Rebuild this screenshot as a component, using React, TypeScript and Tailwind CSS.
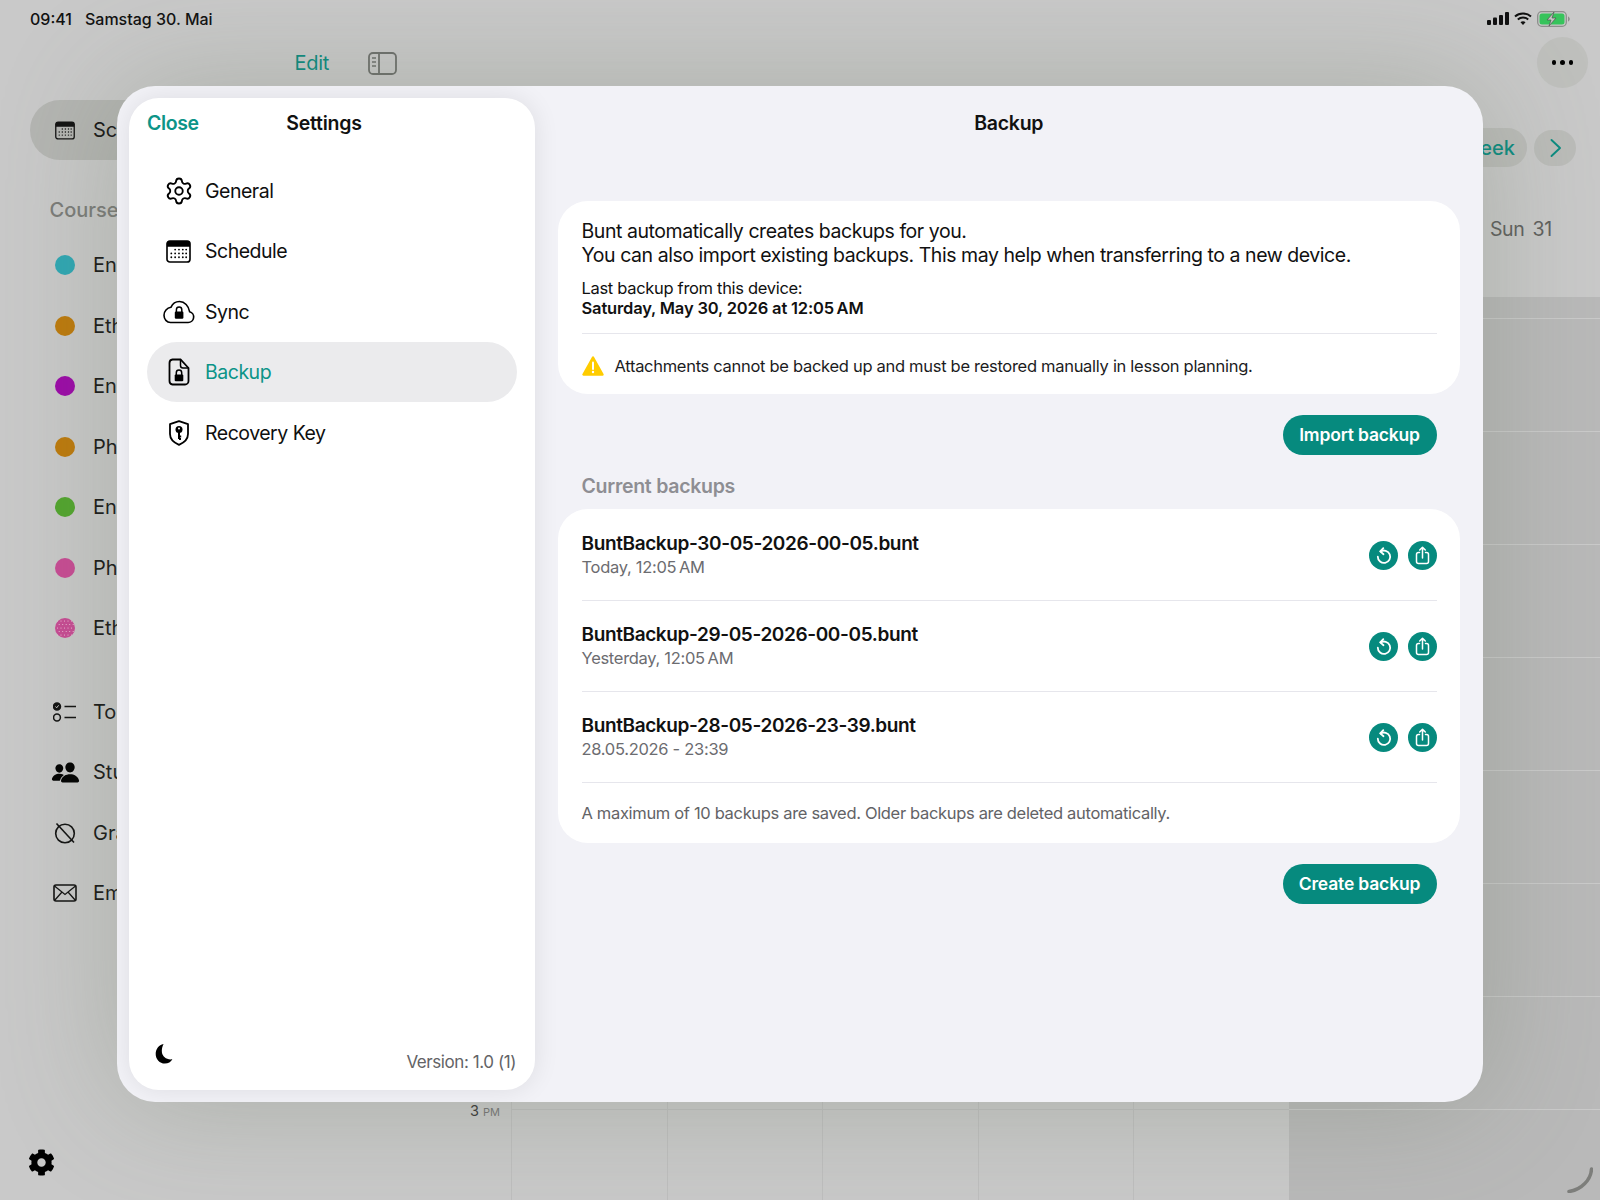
import { Settings as SettingsIcon } from 'lucide-react';
import { FaCog } from 'react-icons/fa';
import { IoPeople } from 'react-icons/io5';

const courses = [
  { name: 'English', color: 'bg-[#2fa7b3]' },
  { name: 'Ethics', color: 'bg-[#bd7a0c]' },
  { name: 'English', color: 'bg-[#9c0aa8]' },
  { name: 'Physics', color: 'bg-[#bd7a0c]' },
  { name: 'English', color: 'bg-[#52a52e]' },
  { name: 'Physics', color: 'bg-[#c84b94]' },
];

const hours = ['8 AM', '9 AM', '10 AM', '11 AM', '12 PM', '1 PM', '2 PM', '3 PM'];
const days = [0, 1, 2, 3, 4, 5, 6];
const rows = [0, 1, 2, 3, 4, 5, 6, 7, 8];

const backups = [
  { name: 'BuntBackup-30-05-2026-00-05.bunt', when: 'Today, 12:05\u202fAM' },
  { name: 'BuntBackup-29-05-2026-00-05.bunt', when: 'Yesterday, 12:05\u202fAM' },
  { name: 'BuntBackup-28-05-2026-23-39.bunt', when: '28.05.2026 - 23:39' },
];

function CalendarIcon({ className }: { className: string }) {
  return (
    <svg viewBox="0 0 26 24" className={className} fill="currentColor">
      <rect x="1" y="1" width="24" height="22" rx="3" fill="none" stroke="currentColor" strokeWidth="1.7" />
      <path d="M1 4a3 3 0 0 1 3-3h18a3 3 0 0 1 3 3v3H1z" />
      {[9, 13, 17].map((y) =>
        [5.5, 9.5, 13.5, 17.5, 21].map((x) =>
          y === 9 && x < 9 ? null : <circle key={`${x}-${y}`} cx={x} cy={y + 1} r="0.95" />
        )
      )}
    </svg>
  );
}

function DottedDot() {
  return (
    <svg viewBox="0 0 20 20" className="h-[20px] w-[20px]">
      <circle cx="10" cy="10" r="10" fill="#c84b94" />
      {[3, 6.5, 10, 13.5, 17].map((y, i) =>
        [2.5, 6, 9.5, 13, 16.5].map((x) => (
          <circle key={`${x}-${y}`} cx={i % 2 ? x + 1.7 : x} cy={y} r="0.55" fill="#f0c4dc" />
        ))
      )}
    </svg>
  );
}

function CloudLockIcon() {
  return (
    <svg viewBox="0 0 32 24" className="h-[24px] w-[32px]" fill="none" stroke="currentColor" strokeWidth="1.6">
      <path d="M7.5 22.5h17.5a5.5 5.5 0 0 0 1.6-10.8C25.8 6 21.6 1.5 16.5 1.5c-4 0-7 2.300-8.600 5.800C4 8 1 11.300 1 15.200c0 4 2.800 7.300 6.500 7.300z" />
      <path d="M13.400 12V9.800a2.700 2.700 0 0 1 5.400 0V12" strokeWidth="1.500" />
      <rect x="11.800" y="11.500" width="8.600" height="7.200" rx="1.200" fill="currentColor" stroke="none" />
    </svg>
  );
}

function DocLockIcon() {
  return (
    <svg viewBox="0 0 22 28" className="h-[28px] w-[22px]" fill="none" stroke="currentColor" strokeWidth="1.8">
      <path d="M4.500 1.500h8l8 8.500v13a3.500 3.500 0 0 1-3.500 3.500H4.500A3.500 3.500 0 0 1 1.500 23V5a3.500 3.500 0 0 1 3-3.500z" />
      <path d="M12.500 1.500V7.500a2.500 2.500 0 0 0 2.500 2.500h5.500" strokeWidth="1.500" />
      <path d="M8.300 17v-2.300a2.700 2.700 0 0 1 5.400 0V17" strokeWidth="1.500" />
      <rect x="6.700" y="16.500" width="8.600" height="6.800" rx="1.100" fill="currentColor" stroke="none" />
    </svg>
  );
}

function ShieldKeyIcon() {
  return (
    <svg viewBox="0 0 22 26" className="h-[26px] w-[22px]" fill="none" stroke="currentColor" strokeWidth="1.8">
      <path d="M11 1.200 2 4.200V14c0 5.300 4.300 8.800 9 10.800 4.700-2 9-5.500 9-10.800V4.200z" strokeLinejoin="round" />
      <circle cx="11" cy="9.500" r="3.500" fill="currentColor" stroke="none" />
      <path d="M11 12v7M11 16.500h2.200M11 19h2" strokeWidth="2" />
      <circle cx="11" cy="8.500" r="1" fill="#fff" stroke="none" />
    </svg>
  );
}

function RestoreIcon() {
  return (
    <svg viewBox="0 0 29 29" className="h-[29px] w-[29px]" fill="none" stroke="#fff" strokeWidth="1.800" strokeLinecap="round">
      <path d="M11.500 10.600a6.200 6.200 0 1 1-2.700 5.100" />
      <path d="M14.300 7.200 11.200 10.400l3.300 2.800" strokeLinejoin="round" />
    </svg>
  );
}

function ShareIcon() {
  return (
    <svg viewBox="0 0 29 29" className="h-[29px] w-[29px]" fill="none" stroke="#fff" strokeWidth="1.500" strokeLinecap="round" strokeLinejoin="round">
      <path d="M11.500 11.500h-1A2 2 0 0 0 8.500 13.500v7a2 2 0 0 0 2 2h8a2 2 0 0 0 2-2v-7a2 2 0 0 0-2-2h-1" />
      <path d="M14.500 17V6.500M11.700 9l2.800-2.800L17.300 9" />
    </svg>
  );
}

function Row({ icon, label, active }: { icon: React.ReactNode; label: string; active?: boolean }) {
  return (
    <div className={`flex h-[60px] items-center rounded-full ${active ? 'bg-[#ebebed] text-[#0c9488]' : 'text-[#0f0f0f]'}`}>
      <div className="flex w-[58px] shrink-0 justify-center pl-[5.5px] text-black">{icon}</div>
      <span className="pt-[1.5px] text-[19.5px] tracking-[-0.025em]">{label}</span>
    </div>
  );
}

function BackupRow({ name, when }: { name: string; when: string }) {
  return (
    <div className="flex h-[91px] items-center justify-between border-b border-[#e6e6ec]">
      <div>
        <div className="pt-[1px] text-[19px] leading-[24px] font-semibold tracking-[-0.02em] text-[#111]">{name}</div>
        <div className="text-[16.5px] leading-[23px] tracking-[-0.018em] text-[#6c6c70]">{when}</div>
      </div>
      <div className="flex gap-[10px] pl-[1px]">
        <div className="rounded-full bg-[#068a7e]">
          <RestoreIcon />
        </div>
        <div className="rounded-full bg-[#068a7e]">
          <ShareIcon />
        </div>
      </div>
    </div>
  );
}

function PrimaryButton({ label }: { label: string }) {
  return (
    <div className="flex justify-end">
      <div className="flex h-[40px] w-[154px] items-center justify-center rounded-full bg-[#068a7e] pt-[1px] text-[17.5px] font-semibold tracking-[-0.01em] text-white">
        {label}
      </div>
    </div>
  );
}

function SettingsModal() {
  return (
    <div className="absolute top-[86px] left-[117px] flex h-[1016px] w-[1366px] overflow-hidden rounded-[38px] bg-[#f2f2f7] p-[12px] shadow-[0_0_120px_rgba(101,114,88,0.3)]">
      <div className="relative flex w-[406px] shrink-0 flex-col rounded-[30px] bg-white shadow-[0_0_26px_rgba(0,0,0,0.09)]">
        <div className="relative flex h-[50px] items-center justify-center pt-[2px] pr-[16px]">
          <span className="absolute left-[18px] text-[19.5px] font-semibold tracking-[-0.02em] text-[#0c9488]">Close</span>
          <span className="text-[19.5px] font-semibold tracking-[-0.012em] text-[#111]">Settings</span>
        </div>
        <div className="mt-[12.5px] flex flex-col gap-[0.5px] px-[18px]">
          <Row icon={<SettingsIcon className="h-[30px] w-[30px]" strokeWidth={1.5} />} label="General" />
          <Row icon={<CalendarIcon className="h-[23px] w-[25px]" />} label="Schedule" />
          <Row icon={<CloudLockIcon />} label="Sync" />
          <Row icon={<DocLockIcon />} label="Backup" active />
          <Row icon={<ShieldKeyIcon />} label="Recovery Key" />
        </div>
        <div className="mt-auto flex items-end justify-between pr-[19px] pb-[17px] pl-[25px]">
          <svg viewBox="0 0 22 24" className="mb-[9px] h-[21px] w-[20px]" fill="#000">
            <path d="M10.500 1C5 2 1.500 6.700 1.500 12.500 1.500 18.500 6 23.500 12 23.500c3.900 0 6.900-1.900 8.600-4.900-6.300 1-11.400-2.500-12-7.900C8.200 7.300 9 3.800 10.500 1z" />
          </svg>
          <span className="text-[17px] leading-[22px] tracking-[-0.025em] text-[#636366]">Version: 1.0 (1)</span>
        </div>
      </div>

      <div className="min-w-0 flex-1 pr-[11.5px] pl-[23px]">
        <div className="flex h-[50px] items-center justify-center pt-[2px] text-[19.5px] font-semibold tracking-[-0.015em] text-[#111]">
          Backup
        </div>
        <div className="mt-[53px] h-[193px] rounded-[30px] bg-white pt-[18px] pr-[23px] pl-[23.5px]">
          <div className="text-[19.5px] leading-[24px] tracking-[-0.023em] text-[#111]">
            <div>Bunt automatically creates backups for you.</div>
            <div>You can also import existing backups. This may help when transferring to a new device.</div>
          </div>
          <div className="mt-[11px] text-[16.5px] leading-[20px] text-[#111]">
            <div className="tracking-[-0.019em]">Last backup from this device:</div>
            <div className="font-semibold tracking-[-0.01em]">Saturday, May 30, 2026 at 12:05{'\u202f'}AM</div>
          </div>
          <div className="mt-[15px] flex h-[65px] items-center gap-[11px] border-t border-[#e6e6ec]">
            <svg viewBox="0 0 22 20" className="h-[20px] w-[22px] shrink-0">
              <path d="M11 1.500 1.500 18.500h19z" fill="#ffcc00" stroke="#ffcc00" strokeWidth="2.400" strokeLinejoin="round" />
              <path d="M11 6.500v6.500" stroke="#fff" strokeWidth="2" strokeLinecap="round" />
              <circle cx="11" cy="16" r="1.200" fill="#fff" />
            </svg>
            <span className="text-[16.5px] tracking-[-0.018em] text-[#1c1c1e]">
              Attachments cannot be backed up and must be restored manually in lesson planning.
            </span>
          </div>
        </div>

        <div className="mt-[21px] pr-[23px]">
          <PrimaryButton label="Import backup" />
        </div>
        <div className="mt-[17px] pl-[23.5px] text-[19.5px] leading-[28px] font-semibold tracking-[-0.014em] text-[#8e8e93]">
          Current backups
        </div>
        <div className="mt-[9px] rounded-[30px] bg-white pt-[1px] pr-[23px] pl-[23.5px]">
          {backups.map((b) => (
            <BackupRow key={b.name} name={b.name} when={b.when} />
          ))}
          <div className="flex h-[60px] items-center text-[16.5px] tracking-[-0.02em] text-[#636366]">
            A maximum of 10 backups are saved. Older backups are deleted automatically.
          </div>
        </div>
        <div className="mt-[21px] pr-[23px]">
          <PrimaryButton label="Create backup" />
        </div>
      </div>
    </div>
  );
}

function SideIconRow({ icon, label }: { icon: React.ReactNode; label: string }) {
  return (
    <div className="flex h-[60.500px] items-center">
      <div className="flex w-[70px] shrink-0 justify-center text-black">{icon}</div>
      <span className="ml-[-7px] text-[20px] text-[#161616]">{label}</span>
    </div>
  );
}

export default function App() {
  return (
    <div
      className="relative flex h-[1200px] w-[1600px] flex-col overflow-hidden bg-[#c9c9c9] text-black"
      style={{ fontFamily: 'Inter, "Noto Sans", sans-serif' }}
    >
      {/* status bar */}
      <div className="flex h-[37px] shrink-0 items-center justify-between pr-[30px] pl-[30px] text-[16px] font-medium text-[#111]">
        <div className="flex gap-[13px]">
          <span>09:41</span>
          <span>Samstag 30. Mai</span>
        </div>
        <div className="flex items-center gap-[5px]">
          <svg viewBox="0 0 22 13" className="h-[13px] w-[22px]" fill="#111">
            <rect x="0" y="8" width="4" height="5" rx="1" />
            <rect x="6" y="5.500" width="4" height="7.500" rx="1" />
            <rect x="12" y="3" width="4" height="10" rx="1" />
            <rect x="18" y="0" width="4" height="13" rx="1" />
          </svg>
          <svg viewBox="0 0 18 13" className="h-[13px] w-[18px]" fill="none" stroke="#111" strokeWidth="2">
            <path d="M1 4.500c4.500-4 11.500-4 16 0M3.800 7.500c3-2.600 7.400-2.600 10.400 0" />
            <path d="M6.500 10.200c1.500-1.200 3.500-1.200 5 0L9 13z" fill="#111" stroke="none" />
          </svg>
          <svg viewBox="0 0 33 16" className="h-[16px] w-[33px]">
            <rect x="0.700" y="0.700" width="28.600" height="14.600" rx="4" fill="none" stroke="#8d8f8c" strokeWidth="1.300" />
            <rect x="2.500" y="2.500" width="25" height="11" rx="2.500" fill="#37c45c" />
            <path d="M31 5.500v5c1-.3 1.800-1.300 1.800-2.500S32 5.800 31 5.500z" fill="#8d8f8c" />
            <path d="M17 1 10 9h4l-2 6 7-8h-4z" fill="#c4c6c3" stroke="#555" strokeWidth="0.700" />
          </svg>
        </div>
      </div>

      <div className="flex min-h-0 flex-1">
        {/* sidebar behind the sheet */}
        <div className="w-[440px] shrink-0 pl-[30px]">
          <div className="flex h-[63px] items-start justify-end gap-[39px] pt-[11px] pr-[43px]">
            <span className="text-[20px] leading-[30px] tracking-[-0.015em] text-[#0b8b80]">Edit</span>
            <svg viewBox="0 0 29 23" className="mt-[4px] h-[23px] w-[29px]" fill="none" stroke="#6e706d" strokeWidth="1.800">
              <rect x="1" y="1" width="27" height="21" rx="4" />
              <path d="M11 1v21" />
              <path d="M4 6h4M4 10h4M4 14h4" strokeWidth="1.400" />
            </svg>
          </div>
          <div className="flex h-[60px] items-center rounded-full bg-[#b4b5b2]">
            <div className="flex w-[70px] shrink-0 justify-center text-[#111]">
              <CalendarIcon className="h-[19px] w-[20px]" />
            </div>
            <span className="ml-[-7px] inline-block w-[24px] overflow-hidden text-[20px] whitespace-nowrap text-[#161616]">
              Sc
            </span>
          </div>
          <div className="mt-[34.500px] pl-[19.500px] text-[20px] leading-[30px] font-medium text-[#7b7c79]">Courses</div>
          <div className="mt-[10.500px] flex flex-col">
            {courses.map((c, i) => (
              <SideIconRow
                key={i}
                icon={<div className={`h-[20px] w-[20px] rounded-full ${c.color}`} />}
                label={c.name}
              />
            ))}
            <SideIconRow icon={<DottedDot />} label="Ethics" />
          </div>
          <div className="mt-[23px] flex flex-col">
            <SideIconRow
              label="To-Dos"
              icon={
                <svg viewBox="0 0 24 20" className="h-[20px] w-[24px]" fill="none" stroke="#111" strokeWidth="1.500">
                  <circle cx="4" cy="4.500" r="3.500" fill="#111" />
                  <path d="M2.500 4.500 3.700 5.800 5.600 3.300" stroke="#ccc" strokeWidth="1" />
                  <circle cx="4" cy="15.500" r="3.400" />
                  <path d="M11.500 4.500H23M11.500 15.500H23" />
                </svg>
              }
            />
            <SideIconRow label="Students" icon={<IoPeople className="h-[29px] w-[29px]" />} />
            <SideIconRow
              label="Grades"
              icon={
                <svg viewBox="0 0 22 22" className="h-[22px] w-[22px]" fill="none" stroke="#111" strokeWidth="1.600">
                  <circle cx="11" cy="11.500" r="9.300" />
                  <path d="M2.500 1.500 20 20.500" />
                </svg>
              }
            />
            <SideIconRow
              label="Emails"
              icon={
                <svg viewBox="0 0 24 18" className="h-[18px] w-[24px]" fill="none" stroke="#111" strokeWidth="1.600">
                  <rect x="1" y="1" width="22" height="16" rx="2" />
                  <path d="M1.500 2 12 10.500 22.500 2M1.500 16.500 9 8M22.500 16.500 15 8" strokeWidth="1.300" />
                </svg>
              }
            />
          </div>
        </div>

        {/* calendar */}
        <div className="flex min-w-0 flex-1 flex-col">
          <div className="flex h-[260px] shrink-0 flex-col items-end">
            <div className="mr-[12px] flex h-[51px] w-[51px] items-center justify-center rounded-full bg-[#bfc0bd]">
              <div className="flex gap-[4px]">
                <div className="h-[4.500px] w-[4.500px] rounded-full bg-black" />
                <div className="h-[4.500px] w-[4.500px] rounded-full bg-black" />
                <div className="h-[4.500px] w-[4.500px] rounded-full bg-black" />
              </div>
            </div>
            <div className="mt-[40px] mr-[24px] flex items-center gap-[7px]">
              <div className="flex h-[39px] items-center rounded-full bg-[#bbbcb9] pr-[12px] pl-[16px] text-[20px] font-medium text-[#0b8b80]">
                Week
              </div>
              <div className="flex h-[36px] w-[42px] items-center justify-center rounded-full bg-[#bbbcb9]">
                <svg viewBox="0 0 13 20" className="h-[20px] w-[13px]" fill="none" stroke="#0b8b80" strokeWidth="1.900" strokeLinecap="round" strokeLinejoin="round">
                  <path d="M2.500 2 11 10l-8.500 8" />
                </svg>
              </div>
            </div>
            <div className="mt-[48px] mr-[48px] flex gap-[8px] text-[19.5px] tracking-[-0.015em] text-[#5f605e]">
              <span>Sun</span>
              <span>31</span>
            </div>
          </div>
          <div className="flex min-h-0 flex-1">
            <div className="w-[71px] shrink-0 pt-[12px] pr-[11px] text-right">
              {hours.map((h) => (
                <div key={h} className="h-[113px] text-[14.5px] leading-[22px] text-[#3a3a3a]">
                  {h.split(' ')[0]} <span className="text-[11px] text-[#777]">{h.split(' ')[1]}</span>
                </div>
              ))}
            </div>
            <div className="grid min-w-0 flex-1 grid-cols-7">
              {days.map((d) => (
                <div
                  key={d}
                  className={d > 4 ? 'bg-black/[0.08]' : 'border-l border-black/[0.05]'}
                >
                  <div className={`h-[22px] border-b ${d > 4 ? 'border-white/25' : 'border-black/[0.05]'}`} />
                  {rows.map((r) => (
                    <div key={r} className={`h-[113px] border-b ${d > 4 ? 'border-white/25' : 'border-black/[0.05]'}`} />
                  ))}
                </div>
              ))}
            </div>
          </div>
        </div>
      </div>

      {/* gear and scroll hint */}
      <FaCog className="absolute bottom-[24px] left-[28px] h-[27px] w-[27px] text-black" />
      <svg viewBox="0 0 26 26" className="absolute right-[7px] bottom-[7px] h-[26px] w-[26px]" fill="none" stroke="#7d7e7b" strokeWidth="3.500" strokeLinecap="round">
        <path d="M24.500 2C24 13 14 23 2 24.500" />
      </svg>

      <SettingsModal />
    </div>
  );
}
